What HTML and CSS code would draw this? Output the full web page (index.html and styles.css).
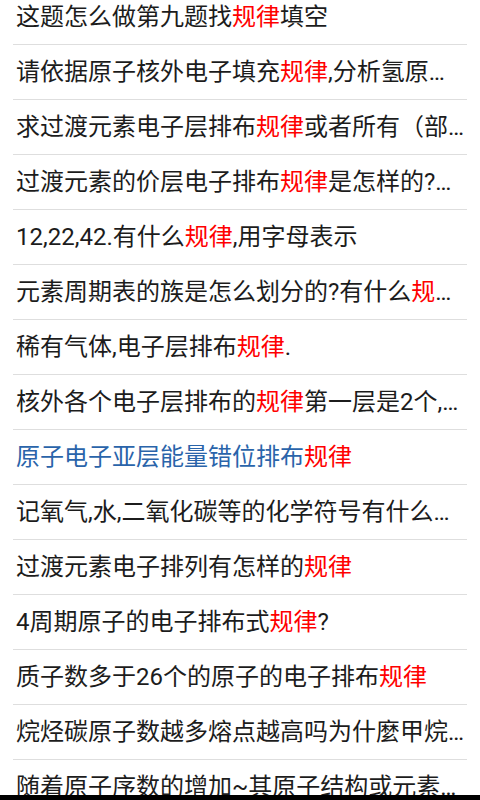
FILE: index.html
```html
<!DOCTYPE html>
<html lang="zh-CN">
<head>
    <meta charset="UTF-8">
    <meta name="viewport" content="width=device-width, initial-scale=1.0">
    <title>规律 - 相关问题</title>
    <link rel="stylesheet" href="styles.css">
</head>
<body>

<div class="screen">
    <div class="scroll">
        <ul class="question-list">
            <li class="question">这题怎么做第九题找<em>规律</em>填空</li>
            <li class="question">请依据原子核外电子填充<em>规律</em>,分析氢原子的电子排布</li>
            <li class="question">求过渡元素电子层排布<em>规律</em>或者所有（部分）元素</li>
            <li class="question">过渡元素的价层电子排布<em>规律</em>是怎样的?为什么</li>
            <li class="question">12,22,42.有什么<em>规律</em>,用字母表示</li>
            <li class="question">元素周期表的族是怎么划分的?有什么<em>规律</em>吗?</li>
            <li class="question">稀有气体,电子层排布<em>规律</em>.</li>
            <li class="question">核外各个电子层排布的<em>规律</em>第一层是2个,第二层</li>
            <li class="question visited">原子电子亚层能量错位排布<em>规律</em></li>
            <li class="question">记氧气,水,二氧化碳等的化学符号有什么<em>规律</em></li>
            <li class="question">过渡元素电子排列有怎样的<em>规律</em></li>
            <li class="question">4周期原子的电子排布式<em>规律</em>?</li>
            <li class="question">质子数多于26个的原子的电子排布<em>规律</em></li>
            <li class="question">烷烃碳原子数越多熔点越高吗为什麼甲烷的熔点</li>
            <li class="question">随着原子序数的增加~其原子结构或元素性质的<em>规律</em></li>
        </ul>
    </div>
    <div class="nav-edge"></div>
</div>

</body>
</html>
```

FILE: styles.css
```css
html, body {
    margin: 0;
    padding: 0;
    background-color: #fff;
}
body {
    font-family: Roboto, "Noto Sans CJK SC", sans-serif;
    color: #1c1c1c;
}
.screen {
    height: 800px;
    display: flex;
    flex-direction: column;
}
.scroll {
    flex: 1;
    overflow: hidden;
}
/* list is scrolled a little, first row is cut at the top */
.question-list {
    list-style: none;
    margin: -10px 13px 0;
    padding: 0;
}
.question {
    height: 54px;
    line-height: 54px;
    padding-left: 3px;
    font-size: 24px;
    white-space: nowrap;
    overflow: hidden;
    text-overflow: ellipsis;
    border-bottom: 1px solid #dedede;
}
.question em {
    font-style: normal;
    color: #ff0000;
}
.question.visited {
    color: #2a64aa;
}
.nav-edge {
    height: 5px;
    background-color: #000;
}
```
